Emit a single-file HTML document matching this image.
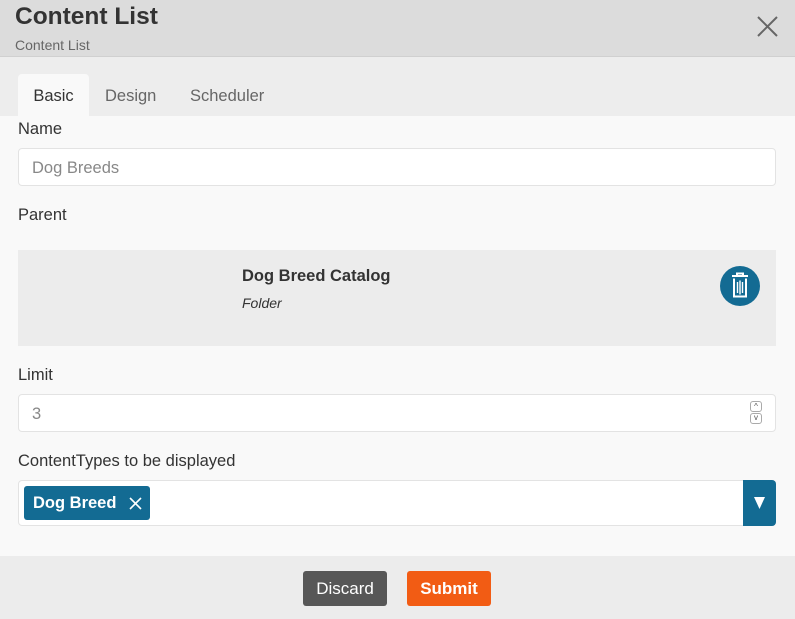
<!DOCTYPE html>
<html><head><style>
*{box-sizing:border-box;margin:0;padding:0}
body{width:795px;height:619px;overflow:hidden;background:#f9f9f9;font-family:"Liberation Sans",sans-serif;color:#333;position:relative}
.abs{position:absolute}
.hdr{left:0;top:0;width:795px;height:57px;background:#dcdcdc;border-bottom:1px solid #d0d0d0}
.tabs{left:0;top:57px;width:795px;height:59px;background:#ededed}
.tab{position:absolute;top:17px;height:42px;line-height:44px;font-size:16.5px;color:#666}
.lbl{font-size:16.5px;color:#333;left:18px}
.inp{left:18px;width:758px;background:#fff;border:1px solid #e3e3e3;border-radius:4px}
.foot{left:0;top:556px;width:795px;height:63px;background:#ececec}
.btn{top:571px;height:35px;border-radius:3px;color:#fff;font-size:17px;line-height:36px;text-align:center}
</style></head><body>
<div class="abs hdr"></div>
<div class="abs" style="left:15px;top:3px;font-size:24.5px;font-weight:bold;color:#333">Content List</div>
<div class="abs" style="left:15px;top:37px;font-size:14px;color:#666">Content List</div>
<svg class="abs" style="left:757px;top:16px" width="21" height="21" viewBox="0 0 21 21"><path d="M1 1L20 20M20 1L1 20" stroke="#666" stroke-width="2"/></svg>
<div class="abs tabs">
<div class="tab" style="left:18px;width:71px;background:#f9f9f9;border-radius:4px 4px 0 0;color:#333;text-align:center">Basic</div>
<div class="tab" style="left:105px">Design</div>
<div class="tab" style="left:190px">Scheduler</div>
</div>
<div class="abs lbl" style="top:120px">Name</div>
<div class="abs inp" style="top:148px;height:38px;padding-left:13px;line-height:38px;font-size:16.5px;color:#888">Dog Breeds</div>
<div class="abs lbl" style="top:206px">Parent</div>
<div class="abs" style="left:18px;top:250px;width:758px;height:96px;background:#ececec"></div>
<div class="abs" style="left:242px;top:267px;font-size:16.5px;font-weight:bold;color:#333">Dog Breed Catalog</div>
<div class="abs" style="left:242px;top:295px;font-size:14px;font-style:italic;color:#333">Folder</div>
<div class="abs" style="left:720px;top:266px;width:40px;height:40px;border-radius:50%;background:#136b93"></div>
<svg class="abs" style="left:729px;top:272px" width="22" height="28" viewBox="0 0 22 28"><path d="M3 4h16M8 4V1.5h6V4M5 6.5v18h12v-18" stroke="#fff" stroke-width="2" fill="none"/><path d="M8.5 10v11M11 8.5v14M13.5 10v11" stroke="#fff" stroke-width="1.4"/></svg>
<div class="abs lbl" style="top:366px">Limit</div>
<div class="abs inp" style="top:394px;height:38px;padding-left:13px;line-height:38px;font-size:16.5px;color:#888">3</div>
<div class="abs" style="left:750px;top:401px;width:12px;height:11px;border:1px solid #aaa;border-radius:3px;font-size:8px;line-height:10px;text-align:center;color:#555">^</div>
<div class="abs" style="left:750px;top:413px;width:12px;height:11px;border:1px solid #aaa;border-radius:3px;font-size:8px;line-height:8px;text-align:center;color:#555">v</div>
<div class="abs lbl" style="top:452px">ContentTypes to be displayed</div>
<div class="abs inp" style="top:480px;height:46px"></div>
<div class="abs" style="left:24px;top:486px;width:126px;height:34px;background:#136b93;border-radius:3px;color:#fff;font-weight:bold;font-size:16.5px;line-height:34px;padding-left:9px">Dog Breed</div>
<svg class="abs" style="left:129px;top:497px" width="13" height="13" viewBox="0 0 13 13"><path d="M1 1L12 12M12 1L1 12" stroke="#fff" stroke-width="1.6"/></svg>
<div class="abs" style="left:743px;top:480px;width:33px;height:46px;background:#136b93;border-radius:0 4px 4px 0"></div>
<svg class="abs" style="left:754px;top:497px" width="11" height="12" viewBox="0 0 11 12"><path d="M0 0H11L5.5 12Z" fill="#fff"/></svg>
<div class="abs foot"></div>
<div class="abs btn" style="left:303px;width:84px;background:#575757">Discard</div>
<div class="abs btn" style="left:407px;width:84px;background:#f25c14;font-weight:bold">Submit</div>
</body></html>
